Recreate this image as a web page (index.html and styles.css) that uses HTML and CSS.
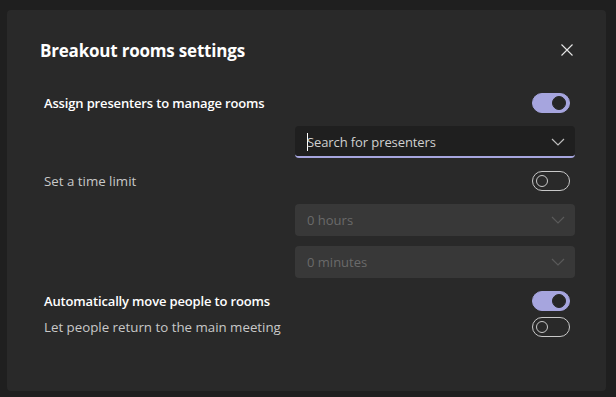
FILE: index.html
```
<!DOCTYPE html>
<html lang="en">
<head>
	<meta charset="UTF-8">
	<title>Breakout rooms settings</title>
	<link rel="stylesheet" href="styles.css">
</head>
<body>
	<div class="dialog">
		<div class="dialog-header">
			<h1 class="dialog-title">Breakout rooms settings</h1>
			<button class="close-btn" aria-label="Close">
				<svg width="12" height="12" viewBox="0 0 12 12"><path d="M0.5 0.5 L11.5 11.5 M11.5 0.5 L0.5 11.5" stroke="#e6e6e6" stroke-width="1.1" fill="none"/></svg>
			</button>
		</div>

		<div class="dialog-body">
			<div class="setting-row">
				<span class="setting-label strong">Assign presenters to manage rooms</span>
				<span class="toggle on"><span class="knob"></span></span>
			</div>

			<div class="field search">
				<span class="field-text"><span class="caret"></span>Search for presenters</span>
				<svg class="chevron" width="14" height="8" viewBox="0 0 14 8"><path d="M1 1 L7 7 L13 1" stroke="#bdbdbd" stroke-width="1.2" fill="none"/></svg>
			</div>

			<div class="setting-row">
				<span class="setting-label">Set a time limit</span>
				<span class="toggle"><span class="knob"></span></span>
			</div>

			<div class="field disabled">
				<span class="field-text">0 hours</span>
				<svg class="chevron" width="14" height="8" viewBox="0 0 14 8"><path d="M1 1 L7 7 L13 1" stroke="#5a5a5a" stroke-width="1.2" fill="none"/></svg>
			</div>

			<div class="field disabled tight">
				<span class="field-text">0 minutes</span>
				<svg class="chevron" width="14" height="8" viewBox="0 0 14 8"><path d="M1 1 L7 7 L13 1" stroke="#5a5a5a" stroke-width="1.2" fill="none"/></svg>
			</div>

			<div class="setting-row">
				<span class="setting-label strong">Automatically move people to rooms</span>
				<span class="toggle on"><span class="knob"></span></span>
			</div>

			<div class="setting-row close">
				<span class="setting-label">Let people return to the main meeting</span>
				<span class="toggle"><span class="knob"></span></span>
			</div>
		</div>
	</div>
</body>
</html>
```

FILE: styles.css
```
body {
	margin: 0;
	background-color: #1f1f1f;
	font-family: "Open Sans", "Noto Sans", sans-serif;
	color: #fff;
}

.dialog {
	margin: 10px 0 0 7px;
	width: 599px;
	height: 381px;
	background-color: #292929;
	border-radius: 4px;
	box-sizing: border-box;
	padding: 30px 31px 0 33px;
}

.dialog-header {
	display: flex;
	align-items: center;
	justify-content: space-between;
	height: 20px;
}

.dialog-title {
	margin: 0;
	font-size: 17px;
	font-weight: 700;
	letter-spacing: -0.2px;
	color: #fff;
}

.close-btn {
	background: none;
	border: none;
	padding: 0;
	margin-right: 2px;
	width: 12px;
	height: 12px;
	display: flex;
	cursor: pointer;
}

.dialog-body {
	display: flex;
	flex-direction: column;
	padding-left: 4px;
	margin-top: 33px;
}

.setting-row {
	display: flex;
	align-items: center;
	justify-content: space-between;
	height: 20px;
	padding-right: 5px;
}

.setting-row.close {
	margin-top: 6px;
}

.setting-label {
	font-size: 13.3px;
	color: #c8c8c8;
}

.setting-label.strong {
	font-size: 13px;
	font-weight: 600;
	letter-spacing: -0.15px;
	color: #fff;
}

.toggle {
	width: 38px;
	height: 20px;
	box-sizing: border-box;
	border: 1px solid #c8c8c8;
	border-radius: 10px;
	display: flex;
	align-items: center;
	padding: 0 3px;
}

.toggle .knob {
	width: 12px;
	height: 12px;
	box-sizing: border-box;
	border: 1px solid #c8c8c8;
	border-radius: 50%;
}

.toggle.on {
	background-color: #a6a5de;
	border-color: #a6a5de;
	justify-content: flex-end;
}

.toggle.on .knob {
	background-color: #262626;
	border-color: #262626;
	width: 14px;
	height: 14px;
}

.field {
	margin: 13px 0 13px 251px;
	height: 32px;
	box-sizing: border-box;
	border-radius: 4px;
	display: flex;
	align-items: center;
	justify-content: space-between;
	padding: 0 10px 0 12px;
	font-size: 13px;
}

.field.search {
	background-color: #1f1f1f;
	border-bottom: 2px solid #a6a5de;
	padding-top: 2px;
	color: #d0d0d0;
	letter-spacing: -0.1px;
}

.field.disabled {
	background-color: #383838;
	color: #6a6a6a;
}

.field.tight {
	margin-top: -3px;
}

.field-text {
	display: flex;
	align-items: center;
}

.caret {
	width: 1px;
	height: 18px;
	background-color: #fff;
	margin-right: -1px;
}
```
